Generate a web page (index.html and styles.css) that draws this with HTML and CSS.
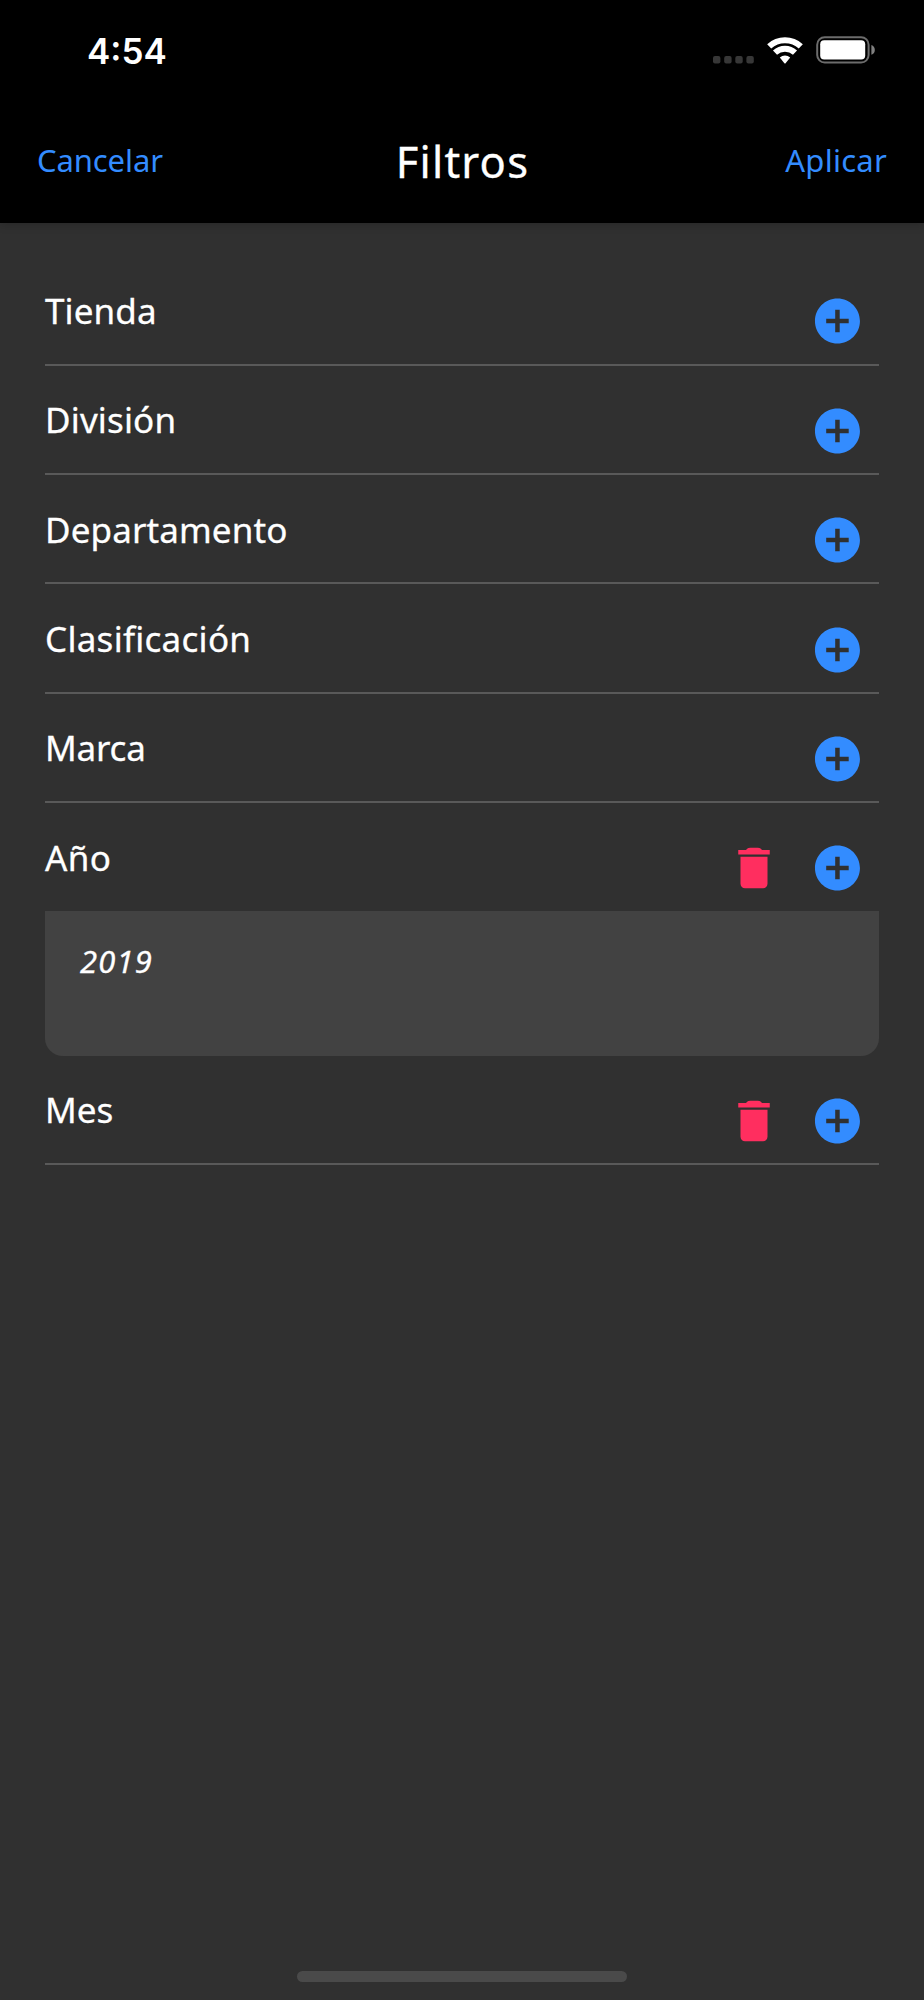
FILE: index.html
```html
<!DOCTYPE html>
<html lang="es">
<head>
<meta charset="utf-8">
<title>Filtros</title>
<link rel="stylesheet" href="styles.css">
</head>
<body>
<svg class="defs" aria-hidden="true">
  <symbol id="add" viewBox="0 0 24 24"><path transform="translate(.2 0)" d="M12 2C6.480 2 2 6.480 2 12s4.480 10 10 10 10-4.480 10-10S17.520 2 12 2zm5 11h-4v4h-2v-4H7v-2h4V7h2v4h4v2z"/></symbol>
  <symbol id="trash" viewBox="0 0 24 24"><path d="M6 19c0 1.100.9 2 2 2h8c1.100 0 2-.9 2-2V7H6v12zM19 4h-3.500l-.3-.4Q14.600 3 13.600 3h-3.200Q9.400 3 8.800 3.600L8.500 4H5v2h14V4z"/></symbol>
</svg>
<div class="screen">
  <header class="header">
    <div class="status">
      <span class="clock">4:54</span>
      <div class="indicators">
        <svg class="dots" viewBox="0 0 42 8"><rect width="7.400" height="7.400" rx="2"/><rect x="11.200" width="7.400" height="7.400" rx="2"/><rect x="22.300" width="7.400" height="7.400" rx="2"/><rect x="33.400" width="7.400" height="7.400" rx="2"/></svg>
        <svg class="wifi" viewBox="0 0 36 27"><g fill="none" stroke="#fff" stroke-width="6"><path d="M2.200 9.400A23.400 23.400 0 0 1 33.800 9.400"/><path d="M8 15.600A14.800 14.800 0 0 1 28 15.600"/></g><path fill="#fff" d="M12.800 20.400A8 8 0 0 1 23.200 20.400L18.600 26.200Q18 26.800 17.400 26.200Z"/></svg>
        <svg class="battery" viewBox="0 0 60 28"><rect x="1.200" y="1.200" width="51.400" height="25.400" rx="7.500" fill="none" stroke="#6c6c6c" stroke-width="2"/><rect x="4.200" y="4.200" width="45" height="19.400" rx="4" fill="#fff"/><path fill="#808080" d="M55.400 9Q58.800 10.400 58.800 14T55.400 18.800Z"/></svg>
      </div>
    </div>
    <nav class="nav">
      <a class="action cancel">Cancelar</a>
      <h1 class="title">Filtros</h1>
      <a class="action apply">Aplicar</a>
    </nav>
  </header>
  <main class="filters">
    <section class="row"><span class="label tienda">Tienda</span><svg class="icon add"><use href="#add"/></svg></section>
    <section class="row"><span class="label division">División</span><svg class="icon add"><use href="#add"/></svg></section>
    <section class="row"><span class="label departamento">Departamento</span><svg class="icon add"><use href="#add"/></svg></section>
    <section class="row"><span class="label clasificacion">Clasificación</span><svg class="icon add"><use href="#add"/></svg></section>
    <section class="row"><span class="label marca">Marca</span><svg class="icon add"><use href="#add"/></svg></section>
    <section class="row open"><span class="label anio">Año</span><svg class="icon trash"><use href="#trash"/></svg><svg class="icon add"><use href="#add"/></svg></section>
    <div class="selection">2019</div>
    <section class="row"><span class="label mes">Mes</span><svg class="icon trash"><use href="#trash"/></svg><svg class="icon add"><use href="#add"/></svg></section>
  </main>
  <div class="home"></div>
</div>
</body>
</html>
```

FILE: styles.css
```css
* { box-sizing: border-box; }
body { margin: 0; background: #303030; color: #fff; font-family: "Noto Sans", sans-serif; }
.defs { display: none; }
.screen { height: 2000px; display: flex; flex-direction: column; overflow: hidden; }

.header { height: 223px; flex: none; background: #000; box-shadow: 0 0 10px rgba(0, 0, 0, .25); }
.status { height: 98px; padding: 2px 48px 0 87px; display: flex; justify-content: space-between; align-items: center; }
.clock { font: 600 35px/50px Inter, sans-serif; padding-top: 2px; }
.indicators { display: flex; align-items: flex-end; height: 28px; }
.dots { width: 42px; height: 8px; fill: #373737; }
.wifi { width: 36px; height: 27px; margin-left: 12px; }
.battery { width: 60px; height: 28px; margin-left: 13px; }
.nav { height: 125px; padding: 0 37px 0 37px; display: grid; grid-template-columns: 1fr auto 1fr; align-items: center; }
.action { font-size: 31px; line-height: 42px; padding-bottom: 2px; color: #338cff; }
.cancel { letter-spacing: -.1px; }
.apply { justify-self: end; letter-spacing: .25px; }
.title { margin: 0; font-size: 43.5px; font-weight: 400; line-height: 60px; letter-spacing: 1.2px; padding-left: 1px; -webkit-text-stroke: .3px #fff; }

.filters { flex: 1; padding: 33.2px 45px 0; }
.row { height: 109.4px; display: flex; align-items: center; border-bottom: 2px solid #595959; padding-right: 15px; }
.row.open { height: 107.6px; border-bottom: 0; }
.label { flex: 1; font-size: 35px; line-height: 48px; padding-top: 2px; -webkit-text-stroke: .3px #fff; }
.tienda { letter-spacing: .1px; }
.division { letter-spacing: .15px; }
.departamento { letter-spacing: .12px; }
.clasificacion { letter-spacing: .27px; }
.marca { letter-spacing: -.2px; }
.anio { letter-spacing: .4px; }
.mes { letter-spacing: 0; }
.icon { width: 54px; height: 54px; margin-top: 23px; }
.trash { fill: #ff2e5f; margin-right: 29.5px; }
.add { fill: #338cff; }
.selection { height: 145px; padding: 29px 35px; background: #424242; border-radius: 0 0 18px 18px; font-size: 31px; line-height: 42px; font-style: italic; letter-spacing: 1.15px; -webkit-text-stroke: .3px #fff; }

.home { width: 330px; height: 11px; margin: 0 auto 18px; flex: none; border-radius: 6px; background: #4a4a4a; }
```
